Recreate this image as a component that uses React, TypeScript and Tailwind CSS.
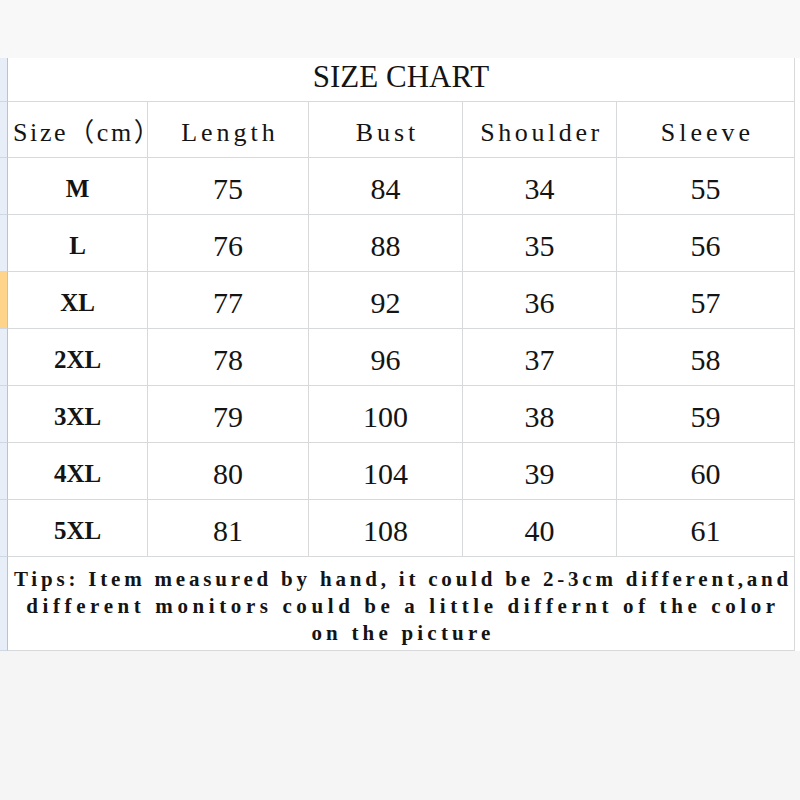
const sizes = [
  { size: 'M', length: 75, bust: 84, shoulder: 34, sleeve: 55 },
  { size: 'L', length: 76, bust: 88, shoulder: 35, sleeve: 56 },
  { size: 'XL', length: 77, bust: 92, shoulder: 36, sleeve: 57 },
  { size: '2XL', length: 78, bust: 96, shoulder: 37, sleeve: 58 },
  { size: '3XL', length: 79, bust: 100, shoulder: 38, sleeve: 59 },
  { size: '4XL', length: 80, bust: 104, shoulder: 39, sleeve: 60 },
  { size: '5XL', length: 81, bust: 108, shoulder: 40, sleeve: 61 },
];

const serif = "font-['Liberation_Serif','Noto_Sans_CJK_SC',serif]";

// row header strip on the far left, like a spreadsheet
function Gutter({ active }: { active?: boolean }) {
  return (
    <div
      className={
        'w-[8px] shrink-0 border-r border-b border-r-[#b3c3da] border-b-[#cfd7e3] ' +
        (active ? 'bg-[#fdd48a]' : 'bg-[#e8eef7]')
      }
    />
  );
}

function Cell({ w, children, className = '' }: { w: string; children?: React.ReactNode; className?: string }) {
  return (
    <div className={`${w} shrink-0 flex items-center justify-center border-r border-b border-[#d8d9da] whitespace-nowrap ${className}`}>
      {children}
    </div>
  );
}

export default function App() {
  return (
    <div className={`w-[800px] h-[800px] bg-[#f5f5f5] flex flex-col text-[#141414] overflow-hidden ${serif}`}>
      <div className="h-[58px] bg-[#f8f8f8]" />

      {/* title */}
      <div className="flex h-[44px] bg-white">
        <Gutter />
        <div className="w-[787px] flex items-center justify-center pb-[4px] border-r border-b border-[#d8d9da] text-[31px]">
          SIZE CHART
        </div>
      </div>

      {/* header */}
      <div className="flex h-[56px] bg-white text-[26px] tracking-[4px]">
        <Gutter />
        <Cell w="w-[140px]" className="pt-[6px] pl-[5px] !justify-start tracking-[2.6px]">Size（cm）</Cell>
        <Cell w="w-[161px]" className="pt-[6px] pl-[4px]">Length</Cell>
        <Cell w="w-[154px]" className="pt-[6px] pl-[4px]">Bust</Cell>
        <Cell w="w-[154px]" className="pt-[6px] pl-[4px] tracking-[3.6px]">Shoulder</Cell>
        <Cell w="w-[178px]" className="pt-[6px] pl-[4px]">Sleeve</Cell>
      </div>

      {sizes.map((r) => (
        <div key={r.size} className="flex h-[57px] bg-white text-[30px]">
          <Gutter active={r.size === 'XL'} />
          <Cell w="w-[140px]" className="pt-[5px] text-[25px] font-bold">{r.size}</Cell>
          <Cell w="w-[161px]" className="pt-[5px]">{r.length}</Cell>
          <Cell w="w-[154px]" className="pt-[5px]">{r.bust}</Cell>
          <Cell w="w-[154px]" className="pt-[5px]">{r.shoulder}</Cell>
          <Cell w="w-[178px]" className="pt-[5px]">{r.sleeve}</Cell>
        </div>
      ))}

      {/* tips */}
      <div className="flex h-[94px] bg-white">
        <Gutter />
        <div className="w-[787px] border-r border-b border-[#d8d9da] pt-[9px] pl-[4px] flex flex-col items-center whitespace-nowrap text-[21px] leading-[27px] font-bold">
          <span className="tracking-[3.8px]">Tips: Item measured by hand, it could be 2-3cm different,and</span>
          <span className="tracking-[4.6px]">different monitors could be a little differnt of the color</span>
          <span className="tracking-[4.2px]">on the picture</span>
        </div>
      </div>

      <div className="flex-1 bg-[#f5f5f5]" />
    </div>
  );
}
